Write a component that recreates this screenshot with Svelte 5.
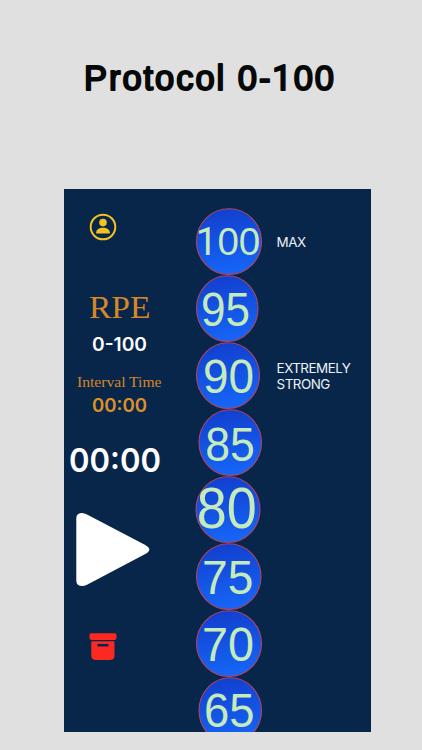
<script>
  const levels = [
    { value: '100', left: 196, width: 66, size: 39.5, x: 195.8, base: 255.6, length: 64.5, note: ['MAX'] },
    { value: '95', left: 196, width: 62.5, size: 48, x: 201, base: 325.9, length: 49 },
    { value: '90', left: 196, width: 64, size: 49, x: 203, base: 392.7, length: 51, note: ['EXTREMELY', 'STRONG'] },
    { value: '85', left: 198.5, width: 63.5, size: 48, x: 205.3, base: 460.7, length: 49.6 },
    { value: '80', left: 195.5, width: 65, size: 56.5, x: 196.8, base: 528.3, length: 60 },
    { value: '75', left: 196, width: 65.5, size: 48, x: 202, base: 594.3, length: 51.3 },
    { value: '70', left: 196, width: 66, size: 48.5, x: 202, base: 660.8, length: 52 },
    { value: '65', left: 198.5, width: 63.5, size: 48, x: 204, base: 726.9, length: 50.5 }
  ];
  const columnLeft = 195;
  const columnTop = 208.4;
  const pitch = 66.9;
</script>

{#snippet digits(text)}{#if text.includes('1')}{text.slice(0, text.indexOf('1'))}<tspan class="one">1</tspan>{text.slice(text.indexOf('1') + 1)}{:else}{text}{/if}{/snippet}

{#snippet line(text, width, cap, size, cls)}
  <svg class="line {cls}" {width} height={cap}>
    <text x="0" y={cap} font-size={size} textLength={width} lengthAdjust="spacingAndGlyphs">{text}</text>
  </svg>
{/snippet}

<main>
  <h1>
    <svg class="line title" width="251" height="26">
      <text x="0" y="25.6" font-size="34.5" textLength="250" lengthAdjust="spacing" xml:space="preserve">{@render digits('Protocol 0-100')}</text>
    </svg>
  </h1>

  <section class="panel">
    <aside>
      <svg class="user" width="28" height="28" viewBox="0 0 28 28">
        <circle cx="14" cy="14" r="12.3" fill="none" stroke="#f3c322" stroke-width="2" />
        <circle cx="14" cy="9.6" r="3.8" fill="#f3c322" />
        <path d="M7.2 20.4v-.9c0-3 3-4.8 6.8-4.8s6.8 1.8 6.8 4.8v.9z" fill="#f3c322" />
      </svg>
      <div class="rpe">{@render line('RPE', 61.5, 20.5, 31.5, 'serif')}</div>
      <div class="range">{@render line('0-100', 55, 14, 19, 'strong')}</div>
      <div class="caption">{@render line('Interval Time', 84.5, 10, 15.4, 'serif')}</div>
      <div class="interval">{@render line('00:00', 55, 14, 19, 'strong amber')}</div>
      <div class="clock">{@render line('00:00', 92, 24, 32.5, 'strong')}</div>
      <svg class="play" width="74" height="74" viewBox="0 0 74 74">
        <path d="M.3 5.5Q.3.2 5.5.1Q8.3 0 11.5 1.7L69.3 32Q73.3 34.3 73.3 36.5Q73.3 38.8 69.3 41L11.5 71.4Q8.3 73.1 5.5 73Q.3 72.8.3 67.5Z" fill="#fff" />
      </svg>
      <svg class="archive" width="28" height="28" viewBox="0 0 28 28">
        <rect x=".5" y=".3" width="27" height="6.6" rx="1.8" fill="#fb2922" />
        <path fill-rule="evenodd" d="M2.3 8.3H25.5V22.8Q25.5 26.9 21.5 26.9H6.3Q2.3 26.9 2.3 22.8ZM9.1 11Q8.3 11 8.3 12.2T9.1 13.4H18.8Q19.6 13.4 19.6 12.2T18.8 11Z" fill="#fb2922" />
      </svg>
    </aside>

    <ul>
      {#each levels as level, i}
        <li>
          <svg class="ball" width="68" height="66.9">
            <defs>
              <linearGradient id="fill{i}" x1="0.35" y1="0" x2="0.5" y2="1">
                <stop offset="0" stop-color="#123fce" />
                <stop offset="1" stop-color="#1666f7" />
              </linearGradient>
            </defs>
            <ellipse
              cx={level.left - columnLeft + level.width / 2}
              cy="33.6"
              rx={level.width / 2 - 0.5}
              ry="32.8"
              fill="url(#fill{i})"
              stroke="#ad4566"
              stroke-width="1.1"
            />
            <text
              x={level.x - columnLeft}
              y={level.base - columnTop - i * pitch}
              font-size={level.size}
              textLength={level.length}
              lengthAdjust="spacingAndGlyphs"
              fill="#c5ebbb">{@render digits(level.value)}</text>
          </svg>
          {#if level.note}
            <p>
              {#each level.note as word}<span>{word}</span>{/each}
            </p>
          {/if}
        </li>
      {/each}
    </ul>
  </section>
</main>

<style>
  :global(body) {
    background: #e0e0e0;
    overflow: hidden;
  }
  main {
    width: 422px;
    height: 750px;
    overflow: hidden;
    background: #e0e0e0;
    box-sizing: border-box;
    padding-top: 64px;
  }
  svg {
    display: block;
  }
  h1 {
    margin: 0 0 98.8px 84px;
    height: 26px;
  }
  .line {
    overflow: visible;
    fill: #fff;
  }
  .title {
    font-family: 'Liberation Sans', sans-serif;
    font-weight: 400;
    fill: #070909;
    stroke: #070909;
    stroke-width: 2px;
    stroke-linejoin: round;
  }
  .one {
    font-family: Roboto, sans-serif;
  }
  .serif {
    font-family: 'Liberation Serif', serif;
    fill: #d78727;
  }
  .strong {
    font-family: Inter, sans-serif;
    font-weight: 600;
  }
  .amber {
    fill: #de912a;
  }
  .panel {
    display: flex;
    width: 306.4px;
    height: 542.8px;
    margin-left: 64.4px;
    background: #082649;
    overflow: hidden;
  }
  aside {
    width: 130.6px;
    flex: none;
    box-sizing: border-box;
    padding-top: 24.7px;
  }
  .user {
    margin-left: 24.4px;
  }
  .rpe {
    margin: 56px 0 0 25.1px;
  }
  .range {
    margin: 19px 0 0 27.4px;
  }
  .caption {
    margin: 26px 0 0 12.5px;
  }
  .interval {
    margin: 11.5px 0 0 27.4px;
  }
  .clock {
    margin: 35.5px 0 0 5px;
  }
  .play {
    margin: 41px 0 0 12px;
  }
  .archive {
    margin: 46px 0 0 24.4px;
  }
  ul {
    list-style: none;
    margin: 0;
    padding: 19.6px 0 0;
    flex: none;
    width: 175.8px;
  }
  li {
    display: flex;
    align-items: center;
    height: 66.9px;
  }
  .ball {
    flex: none;
    overflow: visible;
    font-family: 'Liberation Sans', sans-serif;
  }
  p {
    display: flex;
    flex-direction: column;
    margin: 2px 0 0 13.6px;
    color: #eef1f6;
    font: 400 13.4px/15.7px Inter, sans-serif;
    letter-spacing: -0.5px;
    white-space: nowrap;
  }
</style>
